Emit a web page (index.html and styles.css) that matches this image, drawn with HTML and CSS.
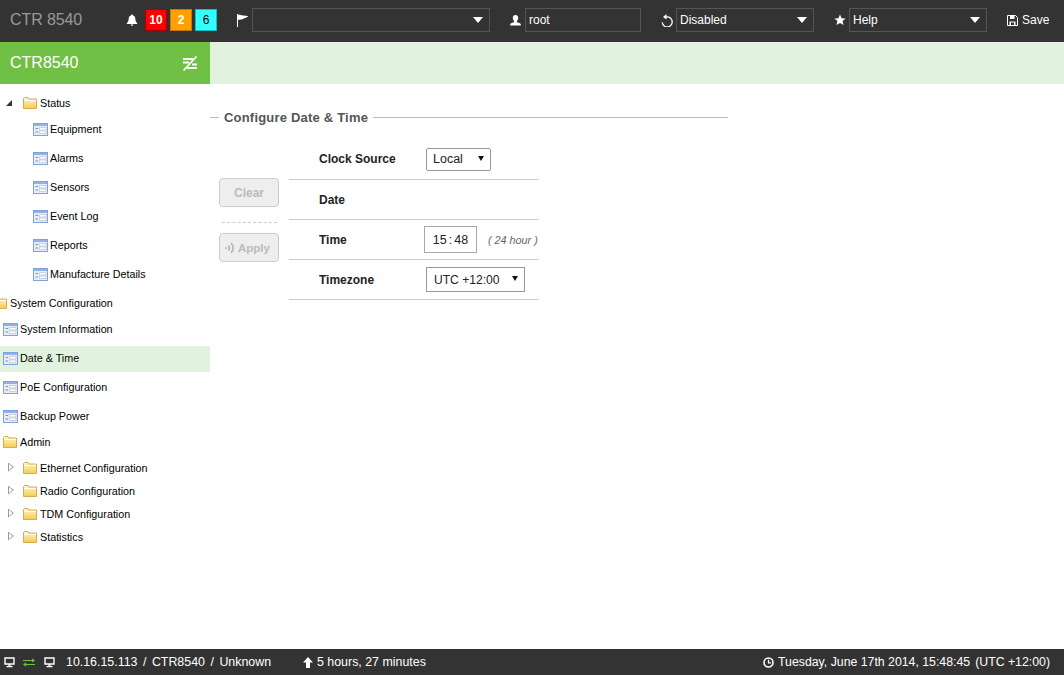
FILE: index.html
```html
<!DOCTYPE html>
<html lang="en">
<head>
  <meta charset="UTF-8">
  <meta name="viewport" content="width=device-width, initial-scale=1.0">
  <title>CTR 8540</title>
  <link rel="stylesheet" href="styles.css">
</head>
<body>
  <svg class="defs" width="0" height="0">
    <defs>
      <linearGradient id="folderFill" x1="0" y1="0" x2="0" y2="1">
        <stop offset="0" stop-color="#fdf6d0"/>
        <stop offset="1" stop-color="#f5cc4e"/>
      </linearGradient>
      <symbol id="i-folder" viewBox="0 0 14 12">
        <path d="M.5 11.5V1.5L1.5.5H5L6 2H13.5V11.5Z" fill="url(#folderFill)" stroke="#dca850"/>
        <path d="M1 3.500H13" stroke="#fff"/>
      </symbol>
      <symbol id="i-page" viewBox="0 0 15 13">
        <rect x=".5" y=".5" width="14" height="12" fill="#e8edf5" stroke="#7fa3d8"/>
        <rect x="1" y="1" width="13" height="2" fill="#8fb3e2"/>
        <path d="M2.500 5.500H5M2.500 9H5" stroke="#6f93c8"/>
        <path d="M6.500 4.500H13V7H6.500ZM6.500 8H13V10.500H6.500Z" fill="#fff" stroke="#c2c8d2" stroke-width=".8"/>
      </symbol>
      <symbol id="i-bell" viewBox="0 0 12 12">
        <path d="M6 0.500C6.600 .5 7 .9 7 1.400C8.800 1.900 9.300 3.300 9.400 5C9.500 7 10 8 11.200 9.300V10H.8V9.300C2 8 2.500 7 2.600 5C2.700 3.300 3.200 1.900 5 1.400C5 .9 5.400 .5 6 .5ZM4.700 10.500H7.300C7.200 11.300 6.700 11.800 6 11.800C5.300 11.800 4.800 11.300 4.700 10.500Z" fill="#fff"/>
      </symbol>
      <symbol id="i-flag" viewBox="0 0 12 13">
        <path d="M.5 0V13" stroke="#fff"/>
        <path d="M1 .5C4 1.500 8 1.500 11.500 2.200C9 3.500 7 4.500 6 5C4 5.800 2.500 5.500 1 6Z" fill="#fff"/>
      </symbol>
      <symbol id="i-user" viewBox="0 0 11 11">
        <path d="M5.500 0C7.200 0 8.200 1.200 8.200 3C8.200 4.400 7.600 5.400 6.900 6V7.200C8.500 7.700 10.500 8.100 10.800 9.300V10.500H.2V9.300C.5 8.100 2.500 7.700 4.100 7.200V6C3.400 5.400 2.800 4.400 2.800 3C2.800 1.200 3.800 0 5.500 0Z" fill="#fff"/>
      </symbol>
      <symbol id="i-reload" viewBox="0 0 12 13">
        <path d="M3.800 3.200A5 5 0 1 1 1.200 8" fill="none" stroke="#fff" stroke-width="1.300" transform="translate(0 .3)"/>
        <path d="M5.500 0V5.500L2 3Z" fill="#fff"/>
      </symbol>
      <symbol id="i-star" viewBox="0 0 12 12">
        <path d="M6 .5L7.600 4.200L11.600 4.500L8.600 7.100L9.500 11L6 8.900L2.500 11L3.400 7.100L.4 4.500L4.400 4.200Z" fill="#fff"/>
      </symbol>
      <symbol id="i-save" viewBox="0 0 11 11">
        <path d="M.5.500H8.500L10.500 2.500V10.500H.5Z" fill="none" stroke="#fff"/>
        <path d="M3 1H7.500V4H3ZM2.500 6.500H8.500V10H2.500Z" fill="#fff"/>
        <path d="M4 7.500H7V10H4Z" fill="#333"/>
      </symbol>
      <symbol id="i-collapse" viewBox="0 0 16 15">
        <path d="M1 3H11M1 6.500H7M10 8.500H15M5 12H15" stroke="#fff" stroke-width="2" fill="none"/>
        <path d="M1.500 14.500L14.500 .5" stroke="#fff" stroke-width="1.700" fill="none"/>
      </symbol>
      <symbol id="i-monitor" viewBox="0 0 11 11">
        <path d="M1 1H10V7H1Z" fill="none" stroke="#fff" stroke-width="1.400"/>
        <path d="M4.500 7H6.500V9H8.500V10.300H2.500V9H4.500Z" fill="#fff"/>
      </symbol>
      <symbol id="i-link" viewBox="0 0 12 9">
        <path d="M0 2.500H10M2 6.500H12" stroke="#6fc044" stroke-width="1"/>
        <path d="M9 .5L12 2.500L9 4.500ZM3 4.500L0 6.500L3 8.500Z" fill="#6fc044"/>
      </symbol>
      <symbol id="i-up" viewBox="0 0 10 11">
        <path d="M5 0L10 5.500H7V11H3V5.500H0Z" fill="#fff"/>
      </symbol>
      <symbol id="i-clock" viewBox="0 0 11 11">
        <circle cx="5.500" cy="5.500" r="4.500" fill="none" stroke="#fff" stroke-width="1.600"/>
        <path d="M5.500 2.800V5.800H8" fill="none" stroke="#fff" stroke-width="1.200"/>
      </symbol>
      <symbol id="i-signal" viewBox="0 0 11 12">
        <circle cx="1.200" cy="6" r="1" fill="#b5b5b5"/>
        <path d="M3.500 3.500A4 4 0 0 1 3.500 8.500M6 1A7 7 0 0 1 6 11" fill="none" stroke="#b5b5b5" stroke-width="1.700"/>
      </symbol>
    </defs>
  </svg>

  <header class="topbar">
    <span class="brand">CTR 8540</span>
    <svg class="ico bell"><use href="#i-bell"/></svg>
    <span class="badge badge-red">10</span>
    <span class="badge badge-orange">2</span>
    <span class="badge badge-cyan">6</span>
    <svg class="ico flag"><use href="#i-flag"/></svg>
    <div class="dark-select sel-flag"><select aria-label="Flag"><option></option></select></div>
    <svg class="ico user"><use href="#i-user"/></svg>
    <input class="dark-input" type="text" value="root" aria-label="User">
    <svg class="ico reload"><use href="#i-reload"/></svg>
    <div class="dark-select sel-refresh"><select aria-label="Refresh"><option>Disabled</option></select></div>
    <svg class="ico star"><use href="#i-star"/></svg>
    <div class="dark-select sel-help"><select aria-label="Help"><option>Help</option></select></div>
    <a class="save"><svg class="ico"><use href="#i-save"/></svg>Save</a>
  </header>

  <div class="titlebar">
    <div class="titlebar-name">
      <span>CTR8540</span>
      <svg class="collapse"><use href="#i-collapse"/></svg>
    </div>
  </div>

  <div class="main">
    <nav class="tree">
      <div class="row row-folder lvl-1"><span class="tog tog-open"></span><svg class="folder"><use href="#i-folder"/></svg>Status</div>
      <div class="row row-leaf lvl-1b"><svg class="page"><use href="#i-page"/></svg>Equipment</div>
      <div class="row row-leaf lvl-1b"><svg class="page"><use href="#i-page"/></svg>Alarms</div>
      <div class="row row-leaf lvl-1b"><svg class="page"><use href="#i-page"/></svg>Sensors</div>
      <div class="row row-leaf lvl-1b"><svg class="page"><use href="#i-page"/></svg>Event Log</div>
      <div class="row row-leaf lvl-1b"><svg class="page"><use href="#i-page"/></svg>Reports</div>
      <div class="row row-leaf lvl-1b"><svg class="page"><use href="#i-page"/></svg>Manufacture Details</div>
      <div class="row row-folder lvl-clip"><svg class="folder"><use href="#i-folder"/></svg>System Configuration</div>
      <div class="row row-leaf lvl-0"><svg class="page"><use href="#i-page"/></svg>System Information</div>
      <div class="row row-leaf lvl-0 active"><svg class="page"><use href="#i-page"/></svg>Date &amp; Time</div>
      <div class="row row-leaf lvl-0"><svg class="page"><use href="#i-page"/></svg>PoE Configuration</div>
      <div class="row row-leaf lvl-0"><svg class="page"><use href="#i-page"/></svg>Backup Power</div>
      <div class="row row-admin lvl-0"><svg class="folder"><use href="#i-folder"/></svg>Admin</div>
      <div class="row row-sub lvl-1"><span class="tog tog-closed"></span><svg class="folder"><use href="#i-folder"/></svg>Ethernet Configuration</div>
      <div class="row row-sub lvl-1"><span class="tog tog-closed"></span><svg class="folder"><use href="#i-folder"/></svg>Radio Configuration</div>
      <div class="row row-sub lvl-1"><span class="tog tog-closed"></span><svg class="folder"><use href="#i-folder"/></svg>TDM Configuration</div>
      <div class="row row-sub lvl-1"><span class="tog tog-closed"></span><svg class="folder"><use href="#i-folder"/></svg>Statistics</div>
    </nav>

    <section class="content">
      <h2 class="legend"><span>Configure Date &amp; Time</span></h2>
      <div class="panel">
        <div class="actions">
          <button class="btn" type="button">Clear</button>
          <div class="dash"></div>
          <button class="btn btn-apply" type="button"><svg class="signal"><use href="#i-signal"/></svg>Apply</button>
        </div>
        <div class="form">
          <div class="form-row">
            <label>Clock Source</label>
            <div class="light-select sel-clock"><select aria-label="Clock Source"><option>Local</option></select></div>
          </div>
          <div class="form-row">
            <label>Date</label>
          </div>
          <div class="form-row">
            <label>Time</label>
            <div class="timebox"><span>15</span><i>:</i><span>48</span></div>
            <em class="hint">( 24 hour )</em>
          </div>
          <div class="form-row">
            <label>Timezone</label>
            <div class="light-select sel-zone"><select aria-label="Timezone"><option>UTC +12:00</option></select></div>
          </div>
        </div>
      </div>
    </section>
  </div>

  <footer class="statusbar">
    <svg class="ico mon"><use href="#i-monitor"/></svg>
    <svg class="link"><use href="#i-link"/></svg>
    <svg class="ico mon"><use href="#i-monitor"/></svg>
    <span class="crumbs">10.16.15.113<b>/</b>CTR8540<b>/</b>Unknown</span>
    <svg class="ico up"><use href="#i-up"/></svg>
    <span>5 hours, 27 minutes</span>
    <span class="clock"><svg class="ico"><use href="#i-clock"/></svg>Tuesday, June 17th 2014, 15:48:45<span class="zone">(UTC +12:00)</span></span>
  </footer>
</body>
</html>
```

FILE: styles.css
```css
* {
  padding: 0;
  margin: 0;
  box-sizing: border-box;
}
html,body {
  width: 100%;
  height: 100%;
}
body {
  display: flex;
  flex-direction: column;
  overflow: hidden;
  font-family: "Liberation Sans", Arial, sans-serif;
  font-size: 12px;
  color: #000;
  background: #fff;
}
.defs {
  position: absolute;
}
.ico {
  display: block;
  flex: none;
  width: 11px;
  height: 11px;
}

/* top bar */
.topbar {
  flex: none;
  height: 42px;
  display: flex;
  align-items: center;
  background: #333;
  color: #fff;
  padding: 0 0 2px 10px;
}
.brand {
  width: 116px;
  font-size: 16px;
  letter-spacing: -.1px;
  color: #999;
}
.bell {
  width: 12px;
  height: 12px;
  margin-right: 7px;
}
.badge {
  width: 22px;
  height: 22px;
  margin-right: 3px;
  line-height: 20px;
  text-align: center;
  font-weight: bold;
  font-size: 12px;
  border: 1px solid;
}
.badge-red {
  background: #f00;
  border-color: #a00;
}
.badge-orange {
  background: #ffa000;
  border-color: #c47a10;
}
.badge-cyan {
  background: #33ffff;
  border-color: #10c0c8;
  color: #000;
  font-weight: normal;
}
.flag {
  width: 12px;
  height: 13px;
  margin: 0 3px 0 17px;
}
.dark-select {
  position: relative;
  height: 24px;
  border: 1px solid #555;
}
.dark-select select {
  display: block;
  width: 100%;
  height: 100%;
  appearance: none;
  border: 0;
  outline: 0;
  background: transparent;
  color: #fff;
  font: 12px "Liberation Sans", Arial, sans-serif;
  padding-left: 3px;
}
.dark-select::after {
  content: "";
  position: absolute;
  right: 6px;
  top: 8px;
  border-left: 5px solid transparent;
  border-right: 5px solid transparent;
  border-top: 6px solid #fff;
}
.sel-flag {
  width: 238px;
}
.user {
  margin: 0 4px 0 20px;
}
.dark-input {
  width: 116px;
  height: 24px;
  border: 1px solid #555;
  background: transparent;
  color: #fff;
  outline: 0;
  font: 12px "Liberation Sans", Arial, sans-serif;
  padding-left: 3px;
}
.reload {
  width: 12px;
  height: 13px;
  margin: 0 3px 0 20px;
}
.sel-refresh {
  width: 138px;
}
.star {
  width: 12px;
  height: 12px;
  margin: 0 3px 0 20px;
}
.sel-help {
  width: 138px;
}
.save {
  display: flex;
  align-items: center;
  gap: 4px;
  margin-left: 20px;
}

/* green title */
.titlebar {
  flex: none;
  height: 42px;
  background: #e1f3df;
}
.titlebar-name {
  width: 210px;
  height: 42px;
  display: flex;
  align-items: center;
  justify-content: space-between;
  padding: 0 12px 0 10px;
  background: #70c045;
  color: #fff;
  font-size: 16px;
}
.collapse {
  width: 16px;
  height: 15px;
  margin-top: 1px;
}

.main {
  flex: 1;
  display: flex;
  min-height: 0;
}

/* tree */
.tree {
  flex: none;
  width: 210px;
  padding-top: 6px;
  font-size: 10.75px;
  overflow: hidden;
}
.row {
  display: flex;
  align-items: center;
  white-space: nowrap;
}
.row-folder {
  height: 26px;
}
.row-leaf {
  height: 26px;
  margin-bottom: 3px;
}
.row-leaf:has(+ .row-admin) {
  margin-bottom: 0;
}
.row-admin {
  height: 26px;
  margin-bottom: 1px;
}
.row-sub {
  height: 23px;
}
.lvl-0 {
  padding-left: 3px;
}
.lvl-1 {
  padding-left: 6px;
}
.lvl-1b {
  padding-left: 33px;
}
.lvl-clip {
  padding-left: 0;
}
.lvl-clip .folder {
  margin-left: -7px;
}
.active {
  margin-top: 4px;
  margin-bottom: 2px;
  padding-bottom: 2px;
  background: #e1f3df;
}
.folder {
  flex: none;
  width: 14px;
  height: 12px;
  margin-right: 3px;
}
.page {
  flex: none;
  width: 15px;
  height: 13px;
  margin-right: 2px;
}
.tog {
  flex: none;
  width: 17px;
  margin-right: 0;
  display: block;
  height: 8px;
  position: relative;
}
.tog-open::after {
  content: "";
  position: absolute;
  left: 0;
  top: 1px;
  border-bottom: 6px solid #333;
  border-left: 6px solid transparent;
}
.tog-closed::after {
  content: "";
  position: absolute;
  left: 2px;
  top: -1px;
  width: 6px;
  height: 9px;
  background: #999;
  clip-path: polygon(0 0, 100% 50%, 0 100%, 0 0, 1px 16%, 1px 84%, calc(100% - 1.5px) 50%, 1px 16%);
}

/* content */
.content {
  flex: 1;
  padding-top: 23px;
}
.legend {
  width: 518px;
  height: 20px;
  display: flex;
  align-items: center;
  gap: 5px;
  font-size: 13px;
  letter-spacing: .2px;
  font-weight: bold;
  color: #555;
}
.legend::before {
  content: "";
  width: 9px;
  border-top: 1px solid #bbb;
}
.legend::after {
  content: "";
  flex: 1;
  border-top: 1px solid #bbb;
}
.panel {
  display: flex;
  padding: 12px 0 0 9px;
}
.actions {
  width: 60px;
  margin-right: 10px;
  padding-top: 39px;
}
.btn {
  display: flex;
  align-items: center;
  justify-content: center;
  width: 60px;
  height: 29px;
  border: 1px solid #ccc;
  border-radius: 4px;
  background: #eee;
  color: #bbb;
  font: bold 12px "Liberation Sans", Arial, sans-serif;
}
.btn-apply {
  justify-content: flex-start;
  gap: 2px;
  padding-left: 5px;
  font-size: 11.5px;
}
.signal {
  width: 11px;
  height: 12px;
}
.dash {
  margin: 15px 2px 10px 3px;
  border-top: 1px dashed #ccc;
}
.form {
  width: 250px;
}
.form-row {
  position: relative;
  display: flex;
  align-items: center;
  height: 40px;
  border-bottom: 1px solid #ccc;
  padding-left: 30px;
}
.form-row label {
  width: 107px;
  font-weight: bold;
  color: #222;
}
.form-row:first-child {
  height: 41px;
}
.light-select {
  position: relative;
  background: #fff;
}
.light-select select {
  display: block;
  width: 100%;
  height: 100%;
  appearance: none;
  background: transparent;
  border: 1px solid #999;
  outline: 0;
  color: #222;
  font: 12.5px "Liberation Sans", Arial, sans-serif;
  padding-left: 6px;
}
.light-select::after {
  content: "";
  position: absolute;
  right: 7px;
  top: 8px;
  border-left: 3px solid transparent;
  border-right: 3px solid transparent;
  border-top: 5px solid #111;
}
.sel-clock {
  width: 65px;
  height: 23px;
}
.sel-clock select {
  border-radius: 2px;
}
.sel-zone {
  width: 99px;
  height: 25px;
}
.sel-zone select {
  padding-left: 7px;
  font-size: 12.1px;
}
.sel-zone::after {
  top: 9px;
}
.timebox {
  display: flex;
  align-items: center;
  justify-content: center;
  gap: 2px;
  width: 53px;
  height: 27px;
  margin-left: -2px;
  border: 1px solid #aaa;
  color: #222;
  font-size: 12.5px;
}
.timebox i {
  font-style: normal;
}
.hint {
  margin-left: 11px;
  font-size: 10.8px;
  color: #666;
  white-space: nowrap;
}

/* footer */
.statusbar {
  flex: none;
  height: 26px;
  display: flex;
  align-items: center;
  padding: 0 14px 0 4px;
  background: #333;
  color: #fff;
  font-size: 12.4px;
}
.mon {
  margin-right: 8px;
}
.link {
  flex: none;
  width: 12px;
  height: 9px;
  margin-right: 9px;
}
.crumbs {
  margin-left: 3px;
  width: 237px;
  white-space: nowrap;
}
.crumbs b {
  font-weight: normal;
  margin: 0 5.500px;
}
.up {
  width: 10px;
  margin-right: 4px;
}
.clock {
  display: flex;
  align-items: center;
  gap: 4px;
  margin-left: auto;
  font-size: 12.300px;
}
.zone {
  margin-left: 1px;
}
```
